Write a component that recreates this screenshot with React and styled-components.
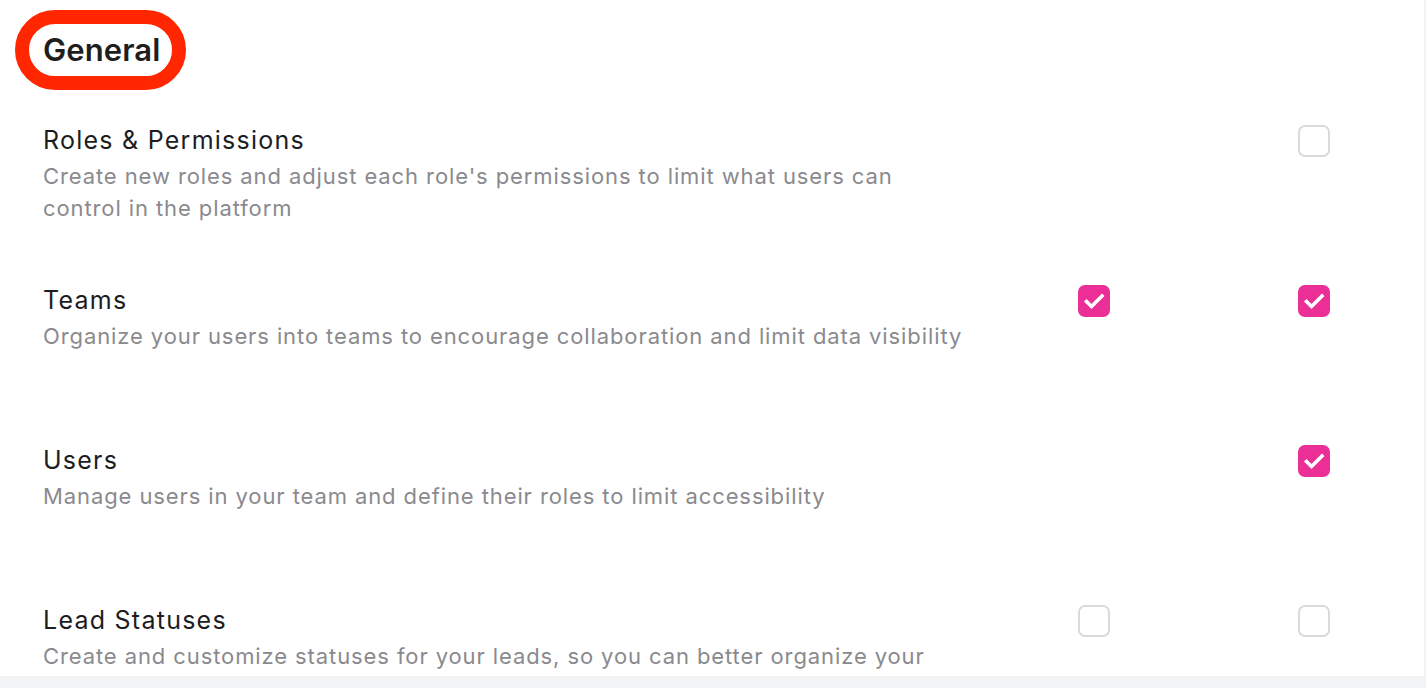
import React from "react";
import styled, { createGlobalStyle } from "styled-components";

const Global = createGlobalStyle`
  html, body { margin: 0; padding: 0; }
  body {
    background: #f2f3f5;
    font-family: Inter, "Noto Sans", "Liberation Sans", sans-serif;
    -webkit-font-smoothing: antialiased;
  }
`;

const Panel = styled.div`
  width: 1424px;
  height: 676px;
  background: #ffffff;
  overflow: hidden;
  position: relative;
  box-sizing: border-box;
  padding: 26px 0 0 43px;
`;

const Heading = styled.h2`
  margin: 0;
  font-size: 31px;
  line-height: 48px;
  font-weight: 600;
  color: #1e1e1e;
  letter-spacing: 0.1px;
`;

const Annotation = styled.div`
  position: absolute;
  left: 15px;
  top: 10px;
  width: 171px;
  height: 80px;
  box-sizing: border-box;
  border: 14px solid #ff2600;
  border-radius: 40px;
  pointer-events: none;
`;

const List = styled.div`
  display: flex;
  flex-direction: column;
  margin-top: 50px;
`;

const Row = styled.div`
  display: grid;
  grid-template-columns: 941px 220px 220px;
  height: 160px;
  align-items: start;
`;

const Text = styled.div`
  display: flex;
  flex-direction: column;
  gap: 4px;
`;

const Title = styled.div`
  font-size: 25px;
  line-height: 32px;
  color: #1d1d1f;
  font-weight: 400;
  letter-spacing: 1.25px;
`;

const Desc = styled.div`
  font-size: 22px;
  line-height: 32px;
  color: #8a8a8e;
  font-weight: 400;
  letter-spacing: 0.9px;
  max-width: 924px;
`;

const Cell = styled.div`
  display: flex;
  justify-content: center;
  padding-top: 1px;
`;

const Box = styled.div`
  width: 32px;
  height: 32px;
  box-sizing: border-box;
  border-radius: 7px;
  border: ${(p) => (p.$checked ? "none" : "2px solid #dadada")};
  background: ${(p) => (p.$checked ? "#eb2f96" : "#ffffff")};
  display: flex;
  align-items: center;
  justify-content: center;
`;

const Check = () => (
  <svg width="32" height="32" viewBox="0 0 32 32">
    <path
      d="M8.5 16.5 L13.5 21.5 L24 11"
      fill="none"
      stroke="#ffffff"
      strokeWidth="3.6"
      strokeLinecap="square"
      strokeLinejoin="miter"
    />
  </svg>
);

const Checkbox = ({ checked }) => (
  <Box $checked={checked}>{checked && <Check />}</Box>
);

const rows = [
  {
    title: "Roles & Permissions",
    desc: "Create new roles and adjust each role's permissions to limit what users can control in the platform",
    a: null,
    b: false,
  },
  {
    title: "Teams",
    desc: "Organize your users into teams to encourage collaboration and limit data visibility",
    a: true,
    b: true,
  },
  {
    title: "Users",
    desc: "Manage users in your team and define their roles to limit accessibility",
    a: null,
    b: true,
  },
  {
    title: "Lead Statuses",
    desc: "Create and customize statuses for your leads, so you can better organize your leads",
    a: false,
    b: false,
  },
];

export default function App() {
  return (
    <>
      <Global />
      <Panel>
        <Heading>General</Heading>
        <Annotation />
        <List>
          {rows.map((r) => (
            <Row key={r.title}>
              <Text>
                <Title>{r.title}</Title>
                <Desc>{r.desc}</Desc>
              </Text>
              <Cell>{r.a !== null && <Checkbox checked={r.a} />}</Cell>
              <Cell>{r.b !== null && <Checkbox checked={r.b} />}</Cell>
            </Row>
          ))}
        </List>
      </Panel>
    </>
  );
}
